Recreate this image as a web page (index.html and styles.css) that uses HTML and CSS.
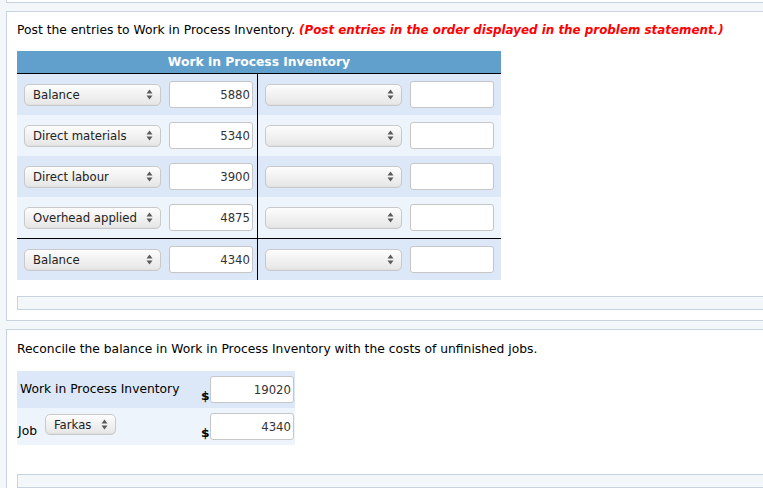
FILE: index.html
```html
<!DOCTYPE html>
<html>
<head>
<meta charset="utf-8">
<link rel="stylesheet" href="styles.css">
</head>
<body>
<div class="prev-panel"></div>
<div class="panel panel-one">
  <p class="prompt">Post the entries to Work in Process Inventory. <span class="note">(Post entries in the order displayed in the problem statement.)</span></p>
  <div class="taccount">
    <div class="t-head">Work in Process Inventory</div>
    <div class="t-row dark">
      <div class="t-cell left">
        <div class="sel wide"><span class="sel-text">Balance</span><svg class="arrows" width="7" height="11" viewBox="0 0 7 11"><path d="M3.5 0.5 L6.5 4.5 L0.5 4.5 Z M0.5 6.5 L6.5 6.5 L3.5 10.5 Z" fill="#5a5a5a"/></svg></div>
        <div class="inp">5880</div>
      </div>
      <div class="t-cell right">
        <div class="sel wide"><span class="sel-text"></span><svg class="arrows" width="7" height="11" viewBox="0 0 7 11"><path d="M3.5 0.5 L6.5 4.5 L0.5 4.5 Z M0.5 6.5 L6.5 6.5 L3.5 10.5 Z" fill="#5a5a5a"/></svg></div>
        <div class="inp"></div>
      </div>
    </div>
    <div class="t-row light">
      <div class="t-cell left">
        <div class="sel wide"><span class="sel-text">Direct materials</span><svg class="arrows" width="7" height="11" viewBox="0 0 7 11"><path d="M3.5 0.5 L6.5 4.5 L0.5 4.5 Z M0.5 6.5 L6.5 6.5 L3.5 10.5 Z" fill="#5a5a5a"/></svg></div>
        <div class="inp">5340</div>
      </div>
      <div class="t-cell right">
        <div class="sel wide"><span class="sel-text"></span><svg class="arrows" width="7" height="11" viewBox="0 0 7 11"><path d="M3.5 0.5 L6.5 4.5 L0.5 4.5 Z M0.5 6.5 L6.5 6.5 L3.5 10.5 Z" fill="#5a5a5a"/></svg></div>
        <div class="inp"></div>
      </div>
    </div>
    <div class="t-row dark">
      <div class="t-cell left">
        <div class="sel wide"><span class="sel-text">Direct labour</span><svg class="arrows" width="7" height="11" viewBox="0 0 7 11"><path d="M3.5 0.5 L6.5 4.5 L0.5 4.5 Z M0.5 6.5 L6.5 6.5 L3.5 10.5 Z" fill="#5a5a5a"/></svg></div>
        <div class="inp">3900</div>
      </div>
      <div class="t-cell right">
        <div class="sel wide"><span class="sel-text"></span><svg class="arrows" width="7" height="11" viewBox="0 0 7 11"><path d="M3.5 0.5 L6.5 4.5 L0.5 4.5 Z M0.5 6.5 L6.5 6.5 L3.5 10.5 Z" fill="#5a5a5a"/></svg></div>
        <div class="inp"></div>
      </div>
    </div>
    <div class="t-row light">
      <div class="t-cell left">
        <div class="sel wide"><span class="sel-text">Overhead applied</span><svg class="arrows" width="7" height="11" viewBox="0 0 7 11"><path d="M3.5 0.5 L6.5 4.5 L0.5 4.5 Z M0.5 6.5 L6.5 6.5 L3.5 10.5 Z" fill="#5a5a5a"/></svg></div>
        <div class="inp">4875</div>
      </div>
      <div class="t-cell right">
        <div class="sel wide"><span class="sel-text"></span><svg class="arrows" width="7" height="11" viewBox="0 0 7 11"><path d="M3.5 0.5 L6.5 4.5 L0.5 4.5 Z M0.5 6.5 L6.5 6.5 L3.5 10.5 Z" fill="#5a5a5a"/></svg></div>
        <div class="inp"></div>
      </div>
    </div>
    <div class="t-row dark total">
      <div class="t-cell left">
        <div class="sel wide"><span class="sel-text">Balance</span><svg class="arrows" width="7" height="11" viewBox="0 0 7 11"><path d="M3.5 0.5 L6.5 4.5 L0.5 4.5 Z M0.5 6.5 L6.5 6.5 L3.5 10.5 Z" fill="#5a5a5a"/></svg></div>
        <div class="inp">4340</div>
      </div>
      <div class="t-cell right">
        <div class="sel wide"><span class="sel-text"></span><svg class="arrows" width="7" height="11" viewBox="0 0 7 11"><path d="M3.5 0.5 L6.5 4.5 L0.5 4.5 Z M0.5 6.5 L6.5 6.5 L3.5 10.5 Z" fill="#5a5a5a"/></svg></div>
        <div class="inp"></div>
      </div>
    </div>
  </div>
  <div class="feedback"></div>
</div>
<div class="panel panel-two">
  <p class="prompt">Reconcile the balance in Work in Process Inventory with the costs of unfinished jobs.</p>
  <div class="recon">
    <div class="r-row dark">
      <div class="r-label">Work in Process Inventory</div>
      <div class="r-dollar">$</div>
      <div class="inp">19020</div>
    </div>
    <div class="r-row light">
      <div class="r-label job"><span class="job-word">Job</span><div class="sel small"><span class="sel-text">Farkas</span><svg class="arrows" width="7" height="11" viewBox="0 0 7 11"><path d="M3.5 0.5 L6.5 4.5 L0.5 4.5 Z M0.5 6.5 L6.5 6.5 L3.5 10.5 Z" fill="#5a5a5a"/></svg></div></div>
      <div class="r-dollar">$</div>
      <div class="inp">4340</div>
    </div>
  </div>
  <div class="feedback bottom"></div>
</div>
</body>
</html>
```
FILE: styles.css
```css
html, body {
  margin: 0;
  padding: 0;
}
body {
  background: #f4f7fa;
  font-family: "DejaVu Sans", Verdana, sans-serif;
  color: #000;
  overflow: hidden;
  width: 763px;
  height: 488px;
}
.prev-panel {
  margin-left: 6px;
  width: 800px;
  height: 2px;
  border-left: 1px solid #c8d3df;
  border-bottom: 1px solid #c8d3df;
  background: #fff;
  box-sizing: content-box;
}
.panel {
  margin-left: 6px;
  width: 800px;
  background: #fff;
  border: 1px solid #c8d3df;
  padding: 0 0 0 10px;
}
.panel-one {
  margin-top: 8px;
  padding-top: 10px;
  box-sizing: border-box;
  height: 310px;
}
.panel-two {
  margin-top: 8px;
  padding-top: 11px;
  height: 200px;
  box-sizing: border-box;
}
.prompt {
  margin: 0;
  font-size: 12.3px;
  line-height: 16px;
}
.note {
  color: #f00;
  font-weight: bold;
  font-style: italic;
  font-size: 11.9px;
}
.taccount {
  margin-top: 13px;
  width: 484px;
}
.t-head {
  background: #619fcc;
  color: #fff;
  font-weight: bold;
  font-size: 12.3px;
  height: 22px;
  line-height: 22px;
  text-align: center;
  border-bottom: 1px solid #000;
}
.t-row {
  display: flex;
  height: 41px;
}
.t-row.total {
  border-top: 1px solid #000;
}
.dark { background: #dce8f7; }
.light { background: #edf4fc; }
.t-cell {
  display: flex;
  align-items: center;
  height: 100%;
  box-sizing: border-box;
}
.t-cell.left {
  width: 241px;
  padding-left: 7px;
  border-right: 1px solid #000;
}
.t-cell.right {
  width: 243px;
  padding-left: 7px;
}
.sel {
  position: relative;
  display: flex;
  align-items: center;
  box-sizing: border-box;
  height: 22px;
  border: 1px solid #c9c9c9;
  border-radius: 5px;
  background: linear-gradient(#fdfdfd, #f1f1f1 50%, #e6e6e6);
  box-shadow: inset 0 -1px 0 #e0e0e0;
  font-size: 11.7px;
  color: #222;
  padding-left: 8px;
}
.sel.wide {
  width: 137px;
  margin-right: 8px;
}
.sel .sel-text {
  flex: 1;
  white-space: nowrap;
}
.sel .arrows {
  margin-right: 7px;
  flex: none;
}
.inp {
  box-sizing: border-box;
  width: 84px;
  height: 27px;
  background: #fff;
  border: 1px solid #c6c6c6;
  border-radius: 3px;
  font-size: 11.7px;
  color: #333;
  text-align: right;
  padding-right: 2px;
  line-height: 27px;
}
.feedback {
  margin-top: 16px;
  height: 14px;
  box-sizing: border-box;
  background: #f4f7fa;
  border: 1px solid #c8d3df;
}
.recon {
  margin-top: 14px;
  width: 278px;
}
.r-row {
  display: flex;
  align-items: center;
  height: 37px;
}
.r-label {
  width: 184px;
  padding-left: 3px;
  font-size: 12.3px;
  box-sizing: border-box;
  align-self: center;
  margin-top: -1px;
}
.r-label.job {
  display: flex;
  align-items: flex-end;
  padding-left: 1px;
  margin-top: 0;
}
.job-word {
  margin-right: 8px;
  line-height: 14px;
  position: relative;
  top: 1px;
}
.sel.small {
  width: 71px;
  height: 21px;
  padding-left: 8px;
  position: relative;
  top: -2px;
}
.r-dollar {
  width: 8px;
  font-size: 12.3px;
  font-weight: bold;
  align-self: flex-end;
  margin-bottom: 5px;
  margin-left: 0;
}
.r-row .inp {
  margin-left: 1px;
}
.feedback.bottom {
  margin-top: 29px;
}
```
